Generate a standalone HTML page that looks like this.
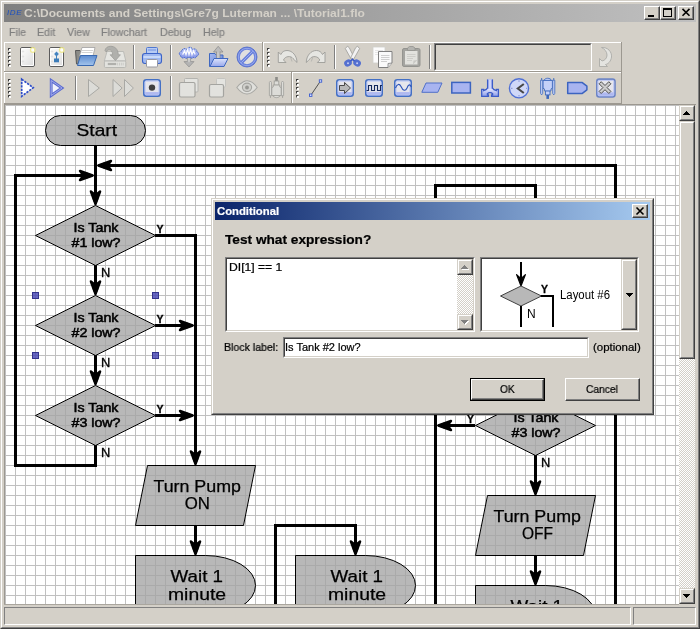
<!DOCTYPE html>
<html>
<head>
<meta charset="utf-8">
<title>Tutorial1.flo</title>
<style>
html,body{margin:0;padding:0;}
body{width:700px;height:629px;overflow:hidden;background:#d4d0c8;position:relative;font-family:"Liberation Sans",sans-serif;font-size:11px;color:#000;}
.abs{position:absolute;}
.t{position:absolute;white-space:nowrap;line-height:1;transform-origin:0 0;will-change:transform;}
svg{will-change:transform;}
/* window frame */
#frame{left:0;top:0;width:700px;height:629px;box-sizing:border-box;border-top:1px solid #d4d0c8;border-left:1px solid #d4d0c8;border-right:1px solid #404040;border-bottom:1px solid #404040;}
#frame2{left:1px;top:1px;width:698px;height:627px;box-sizing:border-box;border-top:1px solid #fff;border-left:1px solid #fff;border-right:1px solid #808080;border-bottom:1px solid #808080;}
#title{left:4px;top:4px;width:692px;height:18px;background:linear-gradient(to right,#808080 0%,#c0c0c0 100%);}
.cap{position:absolute;box-sizing:border-box;width:16px;height:14px;background:#d4d0c8;border-top:1px solid #fff;border-left:1px solid #fff;border-right:1px solid #404040;border-bottom:1px solid #404040;}
.cap:after{content:"";position:absolute;left:0;top:0;right:0;bottom:0;border-right:1px solid #808080;border-bottom:1px solid #808080;}
.menu{color:#808080;font-size:11px;top:27px;transform:scaleX(0.965);-webkit-text-stroke:0.2px #808080;}
.tbline{position:absolute;height:1px;}
.vsep{position:absolute;width:1px;background:#808080;}
.vsep:after{content:"";position:absolute;left:1px;top:0;width:1px;height:100%;background:#fff;}
.grip{position:absolute;width:3px;height:20px;background:repeating-linear-gradient(to bottom,#fff 0,#fff 1px,#404040 1px,#404040 3px,transparent 3px,transparent 4px);}
#canvas{left:5px;top:105px;width:674px;height:499px;background-color:#fff;
 background-image:linear-gradient(to right,#c0c0c0 1px,transparent 1px),linear-gradient(to bottom,#c0c0c0 1px,transparent 1px);
 background-size:10px 10px;background-position:0 0;overflow:hidden;}
.sunk{position:absolute;box-sizing:border-box;border-top:1px solid #808080;border-left:1px solid #808080;border-right:1px solid #fff;border-bottom:1px solid #fff;}
.raised{position:absolute;box-sizing:border-box;background:#d4d0c8;border-top:1px solid #d4d0c8;border-left:1px solid #d4d0c8;border-right:1px solid #404040;border-bottom:1px solid #404040;}
.raised:after{content:"";position:absolute;left:0;top:0;right:0;bottom:0;border-top:1px solid #fff;border-left:1px solid #fff;border-right:1px solid #808080;border-bottom:1px solid #808080;}
.checker{background-color:#fff;background-image:linear-gradient(45deg,#d4d0c8 25%,transparent 25%,transparent 75%,#d4d0c8 75%),linear-gradient(45deg,#d4d0c8 25%,transparent 25%,transparent 75%,#d4d0c8 75%);background-size:2px 2px;background-position:0 0,1px 1px;}
.sunk2{position:absolute;box-sizing:border-box;border-top:1px solid #808080;border-left:1px solid #808080;border-right:1px solid #fff;border-bottom:1px solid #fff;}
.sunk2:after{content:"";position:absolute;left:0;top:0;right:0;bottom:0;border-top:1px solid #404040;border-left:1px solid #404040;border-right:1px solid #d4d0c8;border-bottom:1px solid #d4d0c8;}
.btn{position:absolute;box-sizing:border-box;background:#d4d0c8;border:1px solid #000;text-align:center;font-size:12px;line-height:20px;}
.btn:before{content:"";position:absolute;left:0;top:0;right:0;bottom:0;border-top:1px solid #fff;border-left:1px solid #fff;border-right:1px solid #404040;border-bottom:1px solid #404040;}
.btn:after{content:"";position:absolute;left:1px;top:1px;right:1px;bottom:1px;border-right:1px solid #808080;border-bottom:1px solid #808080;}
.raised2{position:absolute;box-sizing:border-box;background:#d4d0c8;border-top:1px solid #fff;border-left:1px solid #fff;border-right:1px solid #404040;border-bottom:1px solid #404040;}
.raised2:after{content:"";position:absolute;left:0;top:0;right:0;bottom:0;border-right:1px solid #808080;border-bottom:1px solid #808080;}
#dlg .t{-webkit-text-stroke:0.22px #000;}
#dlg #dtitle{-webkit-text-stroke:0.2px #fff;}
.fc{font-family:"Liberation Sans",sans-serif;fill:#000;text-anchor:middle;}
</style>
</head>
<body>
<!-- window frame -->
<div class="abs" id="frame"></div>
<div class="abs" id="frame2"></div>
<!-- title bar -->
<div class="abs" id="title"></div>
<div class="t" id="ide" style="left:6.5px;top:9px;font-size:8px;font-style:italic;color:#1c50c0;letter-spacing:0.6px;">IDE</div>
<div class="t" id="ttl" style="left:23.5px;top:7.6px;font-size:11px;transform:scaleX(1.092);font-weight:bold;color:#d4d0c8;">C:\Documents and Settings\Gre7g Luterman ... \Tutorial1.flo</div>
<div class="cap" style="left:644px;top:6px;"><div class="abs" style="left:3px;top:8px;width:6px;height:2px;background:#000;"></div></div>
<div class="cap" style="left:660px;top:6px;"><div class="abs" style="left:2px;top:1px;width:9px;height:9px;box-sizing:border-box;border:1px solid #000;border-top:2px solid #000;"></div></div>
<div class="cap" style="left:678px;top:6px;"><svg class="abs" style="left:0;top:0" width="14" height="12"><path d="M3.5 1.9 L10.5 8.8 M10.5 1.9 L3.5 8.8" stroke="#000" stroke-width="1.6" fill="none"/></svg></div>
<!-- menu -->
<div class="t menu" id="m1" style="left:9px;">File</div>
<div class="t menu" id="m2" style="left:37px;">Edit</div>
<div class="t menu" id="m3" style="left:67px;">View</div>
<div class="t menu" id="m4" style="left:101px;">Flowchart</div>
<div class="t menu" id="m5" style="left:160px;">Debug</div>
<div class="t menu" id="m6" style="left:203px;">Help</div>
<!-- TOOLBARS -->
<div id="toolbars" class="abs" style="left:0;top:0;width:0;height:0;">
<div class="abs" style="left:4px;top:42px;width:258px;height:1px;background:#fff;"></div>
<div class="abs" style="left:4px;top:42px;width:1px;height:29px;background:#fff;"></div>
<div class="abs" style="left:262px;top:42px;width:1px;height:30px;background:#9c9890;"></div>
<div class="abs" style="left:4px;top:71px;width:259px;height:1px;background:#9c9890;"></div>
<div class="abs" style="left:263px;top:42px;width:358px;height:1px;background:#fff;"></div>
<div class="abs" style="left:263px;top:42px;width:1px;height:29px;background:#fff;"></div>
<div class="abs" style="left:621px;top:42px;width:1px;height:30px;background:#9c9890;"></div>
<div class="abs" style="left:263px;top:71px;width:359px;height:1px;background:#9c9890;"></div>
<div class="abs" style="left:4px;top:72px;width:287px;height:1px;background:#fff;"></div>
<div class="abs" style="left:4px;top:72px;width:1px;height:31px;background:#fff;"></div>
<div class="abs" style="left:291px;top:72px;width:1px;height:32px;background:#9c9890;"></div>
<div class="abs" style="left:4px;top:103px;width:288px;height:1px;background:#9c9890;"></div>
<div class="abs" style="left:292px;top:72px;width:329px;height:1px;background:#fff;"></div>
<div class="abs" style="left:292px;top:72px;width:1px;height:31px;background:#fff;"></div>
<div class="abs" style="left:621px;top:72px;width:1px;height:32px;background:#9c9890;"></div>
<div class="abs" style="left:292px;top:103px;width:330px;height:1px;background:#9c9890;"></div>
<svg class="abs" style="left:8px;top:48px" width="3" height="19" shape-rendering="crispEdges"><rect x="0" y="0" width="2" height="1" fill="#404040"/><rect x="0" y="1" width="1" height="1" fill="#404040"/><rect x="2" y="0" width="1" height="1" fill="#9c9a94"/><rect x="0" y="2" width="1" height="1" fill="#9c9a94"/><rect x="1" y="1" width="2" height="1" fill="#fff"/><rect x="1" y="2" width="2" height="1" fill="#fff"/><rect x="0" y="4" width="2" height="1" fill="#404040"/><rect x="0" y="5" width="1" height="1" fill="#404040"/><rect x="2" y="4" width="1" height="1" fill="#9c9a94"/><rect x="0" y="6" width="1" height="1" fill="#9c9a94"/><rect x="1" y="5" width="2" height="1" fill="#fff"/><rect x="1" y="6" width="2" height="1" fill="#fff"/><rect x="0" y="8" width="2" height="1" fill="#404040"/><rect x="0" y="9" width="1" height="1" fill="#404040"/><rect x="2" y="8" width="1" height="1" fill="#9c9a94"/><rect x="0" y="10" width="1" height="1" fill="#9c9a94"/><rect x="1" y="9" width="2" height="1" fill="#fff"/><rect x="1" y="10" width="2" height="1" fill="#fff"/><rect x="0" y="12" width="2" height="1" fill="#404040"/><rect x="0" y="13" width="1" height="1" fill="#404040"/><rect x="2" y="12" width="1" height="1" fill="#9c9a94"/><rect x="0" y="14" width="1" height="1" fill="#9c9a94"/><rect x="1" y="13" width="2" height="1" fill="#fff"/><rect x="1" y="14" width="2" height="1" fill="#fff"/><rect x="0" y="16" width="2" height="1" fill="#404040"/><rect x="0" y="17" width="1" height="1" fill="#404040"/><rect x="2" y="16" width="1" height="1" fill="#9c9a94"/><rect x="0" y="18" width="1" height="1" fill="#9c9a94"/><rect x="1" y="17" width="2" height="1" fill="#fff"/><rect x="1" y="18" width="2" height="1" fill="#fff"/></svg>
<svg class="abs" style="left:267px;top:48px" width="3" height="19" shape-rendering="crispEdges"><rect x="0" y="0" width="2" height="1" fill="#404040"/><rect x="0" y="1" width="1" height="1" fill="#404040"/><rect x="2" y="0" width="1" height="1" fill="#9c9a94"/><rect x="0" y="2" width="1" height="1" fill="#9c9a94"/><rect x="1" y="1" width="2" height="1" fill="#fff"/><rect x="1" y="2" width="2" height="1" fill="#fff"/><rect x="0" y="4" width="2" height="1" fill="#404040"/><rect x="0" y="5" width="1" height="1" fill="#404040"/><rect x="2" y="4" width="1" height="1" fill="#9c9a94"/><rect x="0" y="6" width="1" height="1" fill="#9c9a94"/><rect x="1" y="5" width="2" height="1" fill="#fff"/><rect x="1" y="6" width="2" height="1" fill="#fff"/><rect x="0" y="8" width="2" height="1" fill="#404040"/><rect x="0" y="9" width="1" height="1" fill="#404040"/><rect x="2" y="8" width="1" height="1" fill="#9c9a94"/><rect x="0" y="10" width="1" height="1" fill="#9c9a94"/><rect x="1" y="9" width="2" height="1" fill="#fff"/><rect x="1" y="10" width="2" height="1" fill="#fff"/><rect x="0" y="12" width="2" height="1" fill="#404040"/><rect x="0" y="13" width="1" height="1" fill="#404040"/><rect x="2" y="12" width="1" height="1" fill="#9c9a94"/><rect x="0" y="14" width="1" height="1" fill="#9c9a94"/><rect x="1" y="13" width="2" height="1" fill="#fff"/><rect x="1" y="14" width="2" height="1" fill="#fff"/><rect x="0" y="16" width="2" height="1" fill="#404040"/><rect x="0" y="17" width="1" height="1" fill="#404040"/><rect x="2" y="16" width="1" height="1" fill="#9c9a94"/><rect x="0" y="18" width="1" height="1" fill="#9c9a94"/><rect x="1" y="17" width="2" height="1" fill="#fff"/><rect x="1" y="18" width="2" height="1" fill="#fff"/></svg>
<svg class="abs" style="left:8px;top:79px" width="3" height="19" shape-rendering="crispEdges"><rect x="0" y="0" width="2" height="1" fill="#404040"/><rect x="0" y="1" width="1" height="1" fill="#404040"/><rect x="2" y="0" width="1" height="1" fill="#9c9a94"/><rect x="0" y="2" width="1" height="1" fill="#9c9a94"/><rect x="1" y="1" width="2" height="1" fill="#fff"/><rect x="1" y="2" width="2" height="1" fill="#fff"/><rect x="0" y="4" width="2" height="1" fill="#404040"/><rect x="0" y="5" width="1" height="1" fill="#404040"/><rect x="2" y="4" width="1" height="1" fill="#9c9a94"/><rect x="0" y="6" width="1" height="1" fill="#9c9a94"/><rect x="1" y="5" width="2" height="1" fill="#fff"/><rect x="1" y="6" width="2" height="1" fill="#fff"/><rect x="0" y="8" width="2" height="1" fill="#404040"/><rect x="0" y="9" width="1" height="1" fill="#404040"/><rect x="2" y="8" width="1" height="1" fill="#9c9a94"/><rect x="0" y="10" width="1" height="1" fill="#9c9a94"/><rect x="1" y="9" width="2" height="1" fill="#fff"/><rect x="1" y="10" width="2" height="1" fill="#fff"/><rect x="0" y="12" width="2" height="1" fill="#404040"/><rect x="0" y="13" width="1" height="1" fill="#404040"/><rect x="2" y="12" width="1" height="1" fill="#9c9a94"/><rect x="0" y="14" width="1" height="1" fill="#9c9a94"/><rect x="1" y="13" width="2" height="1" fill="#fff"/><rect x="1" y="14" width="2" height="1" fill="#fff"/><rect x="0" y="16" width="2" height="1" fill="#404040"/><rect x="0" y="17" width="1" height="1" fill="#404040"/><rect x="2" y="16" width="1" height="1" fill="#9c9a94"/><rect x="0" y="18" width="1" height="1" fill="#9c9a94"/><rect x="1" y="17" width="2" height="1" fill="#fff"/><rect x="1" y="18" width="2" height="1" fill="#fff"/></svg>
<svg class="abs" style="left:296px;top:79px" width="3" height="19" shape-rendering="crispEdges"><rect x="0" y="0" width="2" height="1" fill="#404040"/><rect x="0" y="1" width="1" height="1" fill="#404040"/><rect x="2" y="0" width="1" height="1" fill="#9c9a94"/><rect x="0" y="2" width="1" height="1" fill="#9c9a94"/><rect x="1" y="1" width="2" height="1" fill="#fff"/><rect x="1" y="2" width="2" height="1" fill="#fff"/><rect x="0" y="4" width="2" height="1" fill="#404040"/><rect x="0" y="5" width="1" height="1" fill="#404040"/><rect x="2" y="4" width="1" height="1" fill="#9c9a94"/><rect x="0" y="6" width="1" height="1" fill="#9c9a94"/><rect x="1" y="5" width="2" height="1" fill="#fff"/><rect x="1" y="6" width="2" height="1" fill="#fff"/><rect x="0" y="8" width="2" height="1" fill="#404040"/><rect x="0" y="9" width="1" height="1" fill="#404040"/><rect x="2" y="8" width="1" height="1" fill="#9c9a94"/><rect x="0" y="10" width="1" height="1" fill="#9c9a94"/><rect x="1" y="9" width="2" height="1" fill="#fff"/><rect x="1" y="10" width="2" height="1" fill="#fff"/><rect x="0" y="12" width="2" height="1" fill="#404040"/><rect x="0" y="13" width="1" height="1" fill="#404040"/><rect x="2" y="12" width="1" height="1" fill="#9c9a94"/><rect x="0" y="14" width="1" height="1" fill="#9c9a94"/><rect x="1" y="13" width="2" height="1" fill="#fff"/><rect x="1" y="14" width="2" height="1" fill="#fff"/><rect x="0" y="16" width="2" height="1" fill="#404040"/><rect x="0" y="17" width="1" height="1" fill="#404040"/><rect x="2" y="16" width="1" height="1" fill="#9c9a94"/><rect x="0" y="18" width="1" height="1" fill="#9c9a94"/><rect x="1" y="17" width="2" height="1" fill="#fff"/><rect x="1" y="18" width="2" height="1" fill="#fff"/></svg>
<div class="abs" style="left:133px;top:45px;width:1px;height:24px;background:#808080;"></div>
<div class="abs" style="left:134px;top:45px;width:1px;height:24px;background:#fff;"></div>
<div class="abs" style="left:170px;top:45px;width:1px;height:24px;background:#808080;"></div>
<div class="abs" style="left:171px;top:45px;width:1px;height:24px;background:#fff;"></div>
<div class="abs" style="left:334px;top:45px;width:1px;height:24px;background:#808080;"></div>
<div class="abs" style="left:335px;top:45px;width:1px;height:24px;background:#fff;"></div>
<div class="abs" style="left:429px;top:45px;width:1px;height:24px;background:#808080;"></div>
<div class="abs" style="left:430px;top:45px;width:1px;height:24px;background:#fff;"></div>
<div class="abs" style="left:75px;top:76px;width:1px;height:24px;background:#808080;"></div>
<div class="abs" style="left:76px;top:76px;width:1px;height:24px;background:#fff;"></div>
<div class="abs" style="left:170px;top:76px;width:1px;height:24px;background:#808080;"></div>
<div class="abs" style="left:171px;top:76px;width:1px;height:24px;background:#fff;"></div>
<div class="sunk2" style="left:434px;top:43px;width:158px;height:28px;"></div>
<svg width="0" height="0" style="position:absolute"><defs>
<linearGradient id="gPage" x1="0" y1="0" x2="1" y2="1"><stop offset="0" stop-color="#fff"/><stop offset="1" stop-color="#dcdcdc"/></linearGradient>
<linearGradient id="gBlue" x1="0" y1="0" x2="0" y2="1"><stop offset="0" stop-color="#5c8cd0"/><stop offset="1" stop-color="#a4c4ec"/></linearGradient>
<linearGradient id="gLav" x1="0" y1="0" x2="1" y2="1"><stop offset="0" stop-color="#a4b8f0"/><stop offset="1" stop-color="#6484d8"/></linearGradient>
<linearGradient id="gLav2" x1="0" y1="0" x2="0" y2="1"><stop offset="0" stop-color="#dce4fc"/><stop offset="1" stop-color="#98a8ec"/></linearGradient>
<linearGradient id="gCloud" x1="0" y1="0" x2="0" y2="1"><stop offset="0" stop-color="#c4d0fc"/><stop offset="1" stop-color="#8494e8"/></linearGradient>
<linearGradient id="gJ" x1="0" y1="0" x2="0" y2="1"><stop offset="0" stop-color="#c8d0f8"/><stop offset="0.6" stop-color="#dce0fc"/><stop offset="1" stop-color="#8c9ce8"/></linearGradient>
<linearGradient id="gStem" x1="0" y1="0" x2="1" y2="0"><stop offset="0" stop-color="#a0acf0"/><stop offset="0.5" stop-color="#e4e8fc"/><stop offset="1" stop-color="#a0acf0"/></linearGradient>
<linearGradient id="gGray" x1="0" y1="0" x2="0" y2="1"><stop offset="0" stop-color="#b4b4b0"/><stop offset="1" stop-color="#8c8c88"/></linearGradient>
<linearGradient id="gBtn" x1="0" y1="0" x2="0" y2="1"><stop offset="0" stop-color="#e8e8ec"/><stop offset="0.72" stop-color="#e4e4ec"/><stop offset="0.76" stop-color="#b4bcf0"/><stop offset="1" stop-color="#a4b0ec"/></linearGradient>
</defs></svg>
<svg class="abs" style="left:18px;top:44px" width="20" height="26" viewBox="18 44 20 26"><rect x="20.5" y="47.5" width="14" height="19" rx="1.5" fill="url(#gPage)" stroke="#5c5c5c" stroke-width="1"/><rect x="21.5" y="48.5" width="12" height="17" rx="0.5" fill="none" stroke="#fff" stroke-width="1"/><circle cx="23" cy="51.5" r="0.7" fill="#fff" stroke="#c0c0c0" stroke-width="0.4"/><circle cx="23" cy="56.5" r="0.7" fill="#fff" stroke="#c0c0c0" stroke-width="0.4"/><circle cx="23" cy="61.5" r="0.7" fill="#fff" stroke="#c0c0c0" stroke-width="0.4"/><circle cx="32.8" cy="50" r="2.3" fill="#fff" fill-opacity="0.8" stroke="#f0ea8c" stroke-width="1.3" stroke-opacity="0.9"/></svg>
<svg class="abs" style="left:47px;top:44px" width="20" height="26" viewBox="47 44 20 26"><rect x="49.5" y="47.5" width="14" height="19" rx="1.5" fill="url(#gPage)" stroke="#5c5c5c" stroke-width="1"/><rect x="50.5" y="48.5" width="12" height="17" rx="0.5" fill="none" stroke="#fff" stroke-width="1"/><circle cx="52" cy="51.5" r="0.7" fill="#fff" stroke="#c0c0c0" stroke-width="0.4"/><circle cx="52" cy="56.5" r="0.7" fill="#fff" stroke="#c0c0c0" stroke-width="0.4"/><circle cx="52" cy="61.5" r="0.7" fill="#fff" stroke="#c0c0c0" stroke-width="0.4"/><circle cx="61.8" cy="50" r="2.3" fill="#fff" fill-opacity="0.8" stroke="#f0ea8c" stroke-width="1.3" stroke-opacity="0.9"/><path d="M56.5,51.6 L58.9,54 L56.5,56.4 L54.1,54Z" fill="#4484c0"/><rect x="56" y="56" width="1" height="3" fill="#4484c0"/><rect x="54" y="58.5" width="5" height="3.8" fill="#3c7cb8"/></svg>
<svg class="abs" style="left:73px;top:44px" width="28" height="26" viewBox="73 44 28 26"><path d="M75.5,50.5 L80,50.5 L81,52 L88,52 L88,64 L76.5,64Z" fill="#8c8c88" stroke="#585858" stroke-width="1"/><path d="M79.5,56 L82,47.5 L95,47.5 L93,56Z" fill="#fff" stroke="#a0a0a0" stroke-width="0.8"/><path d="M82,50.5 L93,50.5 M81.5,52.5 L92.5,52.5" stroke="#c8c8c8" stroke-width="0.8"/><path d="M80.5,55.5 L97,55.5 L93.5,65.5 L77.5,65.5Z" fill="url(#gBlue)" stroke="#3868b0" stroke-width="1"/></svg>
<svg class="abs" style="left:102px;top:44px" width="28" height="26" viewBox="102 44 28 26"><path d="M107,51.5 L123.5,51.5 L125.8,61 L104.3,61Z" fill="#e6e6e2" stroke="#b8b8b4" stroke-width="0.9"/><rect x="104.4" y="61" width="21.4" height="6.5" rx="1.2" fill="#e2e2de" stroke="#b4b4b0" stroke-width="0.9"/><rect x="107.8" y="62.9" width="8.4" height="2.2" fill="#b0b0ac"/><path d="M117.6,62.8v2.6 M119.5,62.8v2.6 M121.4,62.8v2.6 M123.2,62.8v2.6" stroke="#c4c4c0" stroke-width="0.8"/><path d="M105,50.5 C105.5,47.5 108,46.3 110.5,46.3 C114.5,46.3 118,48.5 118.3,54.8 L120.4,54.8 L115.4,60.6 L110.2,54.8 L112.6,54.8 C112.6,51.5 111,49.8 109.3,49.8 C108,49.8 107,50.5 106.3,52Z" fill="#b0b0ac" stroke="#9c9c98" stroke-width="0.8"/></svg>
<svg class="abs" style="left:140px;top:44px" width="24" height="26" viewBox="140 44 24 26"><rect x="146.5" y="47.5" width="11" height="8" rx="1" fill="#b8ccf4" stroke="#5078d0" stroke-width="1"/><path d="M148,50 h8" stroke="#7090e0" stroke-width="1"/><rect x="142.5" y="53.5" width="19" height="10" rx="2.5" fill="#a0b8f0" stroke="#3c64c8" stroke-width="1.1"/><path d="M143.5,57 h17" stroke="#dce8fc" stroke-width="1.4"/><rect x="146.5" y="59.5" width="11" height="7.5" rx="1" fill="#fff" stroke="#9898a0" stroke-width="1"/></svg>
<svg class="abs" style="left:177px;top:44px" width="24" height="26" viewBox="177 44 24 26"><rect x="187.3" y="56.4" width="3.4" height="6" fill="#d0d0d0" stroke="#8c8c8c" stroke-width="0.7"/><path d="M184,61.6 L194,61.6 L189,66.9Z" fill="#b4b4b4" stroke="#8c8c8c" stroke-width="0.7"/><rect x="187.7" y="60.5" width="2.6" height="1.8" fill="#c8c8c8"/><path d="M180.8,56 C178.6,54.8 178.8,51.6 181.6,51.2 C181.8,48.8 185,47.8 186.8,49.3 C187.8,46.6 191.8,46.6 192.6,49.3 C195,48 197.6,50 196.8,51.8 C199.2,52.4 199.2,55.4 196.8,56 C196.6,57.6 194.6,58.4 193.2,57.4 C192,58.6 190.6,58.4 190.4,57.4 L187.4,57.4 C187,58.6 185.4,58.8 184.6,57.4 C183,58.6 181,57.8 180.8,56Z" fill="url(#gCloud)" stroke="#3c60c8" stroke-width="0.9" stroke-dasharray="1.4 0.6"/><path d="M182.6,54.6 L184.6,50.8 L186,54.6 L187.6,49.4 L189,54.6 L190.6,49.4 L192,54.6 L193.6,50.8 L195.2,54.6" fill="none" stroke="#fff" stroke-width="1.2" stroke-opacity="0.95"/></svg>
<svg class="abs" style="left:207px;top:44px" width="24" height="26" viewBox="207 44 24 26"><path d="M209.5,53.5 L215,53.5 L216,55 L223,55 L223,66.5 L209.5,66.5Z" fill="url(#gLav)" stroke="#4068c0" stroke-width="1"/><rect x="216.5" y="51" width="3.5" height="8" fill="#c8c8c8" stroke="#888" stroke-width="0.7"/><path d="M213.5,52 L218.2,46.3 L223,52Z" fill="#bcbcbc" stroke="#888" stroke-width="0.7"/><rect x="217" y="51.3" width="2.5" height="1.5" fill="#c8c8c8"/><path d="M214,58.5 L228,58.5 L224,66.5 L210,66.5Z" fill="url(#gLav2)" stroke="#4068c0" stroke-width="1"/></svg>
<svg class="abs" style="left:235px;top:45px" width="24" height="24" viewBox="235 45 24 24"><circle cx="247" cy="57" r="8.6" fill="#e0e0e0" stroke="#6880dc" stroke-width="2.8"/><path d="M241,63 L253,51" stroke="#6880dc" stroke-width="3.2"/><path d="M241.3,62.7 L252.7,51.3" stroke="#a4b4f4" stroke-width="0.9"/><circle cx="247" cy="57" r="8.7" fill="none" stroke="#a0b0f0" stroke-width="0.8"/><circle cx="247" cy="57" r="10" fill="none" stroke="#4c68cc" stroke-width="0.8"/></svg>
<svg class="abs" style="left:276px;top:48px" width="24" height="18" viewBox="276 48 24 18"><path d="M278.3,52 L278.3,62.5 L286,62.5 L283.5,60 C285,56 291,55.5 293,58.5 C295,60 296,62 297,62.5 C297,56 292.5,50.5 287,50.5 C284,50.5 282,52 280.8,54.5Z" fill="#e6e6e2" stroke="#9c9c98" stroke-width="0.9"/><path d="M290.5,57 L292,61.5" stroke="#b0b0ac" stroke-width="0.8" fill="none"/></svg>
<svg class="abs" style="left:304px;top:48px" width="24" height="18" viewBox="304 48 24 18"><g transform="translate(603.3,0) scale(-1,1)"><path d="M278.3,52 L278.3,62.5 L286,62.5 L283.5,60 C285,56 291,55.5 293,58.5 C295,60 296,62 297,62.5 C297,56 292.5,50.5 287,50.5 C284,50.5 282,52 280.8,54.5Z" fill="#e6e6e2" stroke="#9c9c98" stroke-width="0.9"/><path d="M290.5,57 L292,61.5" stroke="#b0b0ac" stroke-width="0.8" fill="none"/></g></svg>
<svg class="abs" style="left:342px;top:44px" width="22" height="26" viewBox="342 44 22 26"><path d="M345.3,48.6 L347.4,46.2 L349.2,47.6 L354.3,57.8 L351.2,59.2Z" fill="#f2f2f2" stroke="#9c9c98" stroke-width="0.8"/><path d="M359.6,48.6 L357.5,46.2 L355.7,47.6 L350.6,57.8 L353.7,59.2Z" fill="#f2f2f2" stroke="#9c9c98" stroke-width="0.8"/><ellipse cx="348" cy="63" rx="3.9" ry="3.4" transform="rotate(-25 348 63)" fill="#5470d0"/><ellipse cx="357.1" cy="63" rx="3.9" ry="3.4" transform="rotate(25 357.1 63)" fill="#5470d0"/><circle cx="348" cy="63.3" r="1" fill="#c4ccf4"/><circle cx="357.1" cy="63.3" r="1" fill="#c4ccf4"/><path d="M349.5,61 L352.5,58.3 L355.5,61 L353.3,61.5 L352.5,60.3 L351.7,61.5Z" fill="#3c5cc8"/></svg>
<svg class="abs" style="left:371px;top:44px" width="24" height="26" viewBox="371 44 24 26"><rect x="373" y="47" width="12" height="16" fill="#fcfcfc" stroke="#d0d0cc" stroke-width="0.8"/><path d="M375,50.5h8 M375,52.5h8 M375,54.5h3" stroke="#dcdcdc" stroke-width="0.7"/><path d="M378.5,51.5 L392,51.5 L392,63 L388,67.5 L378.5,67.5Z" fill="#fafafa" stroke="#808080" stroke-width="1"/><path d="M388,67.5 L388,63.5 L392,63" fill="#e0e0e0" stroke="#808080" stroke-width="0.8"/><path d="M381,55.5h8.5 M381,57.5h8.5 M381,59.5h8.5 M381,61.5h6" stroke="#bcbcbc" stroke-width="0.7"/></svg>
<svg class="abs" style="left:400px;top:44px" width="24" height="26" viewBox="400 44 24 26"><rect x="402.5" y="48.5" width="17.5" height="18" rx="1.5" fill="#a4a4a0" stroke="#949490" stroke-width="1"/><rect x="405" y="51" width="12.5" height="13.5" fill="#e2e2de"/><path d="M407.5,50.5 L407.5,48 L409.5,46.5 L413,46.5 L415,48 L415,50.5Z" fill="#b4b4b0" stroke="#949490" stroke-width="0.8"/><path d="M407,54.5h8.5 M407,56.5h8.5 M407,58.5h6 M407,60.5h5" stroke="#c4c4c0" stroke-width="0.7"/><path d="M417.5,60 L413.5,60.5 L413,64.5Z" fill="#c8c8c4"/></svg>
<svg class="abs" style="left:597px;top:44px" width="18" height="26" viewBox="597 44 18 26"><path d="M601.5,47.5 C608,47 612,52 611.5,57 C611,61.5 608,64 605.5,64.5 L607.5,66.5 L599.5,66.5 L599.5,58.5 L602,61 C605,60.5 607,58 607,55 C607,51.5 604.5,49 601.5,47.5Z" fill="#e4e4e0" stroke="#acaca8" stroke-width="0.9"/></svg>
<svg class="abs" style="left:19px;top:76px" width="18" height="24" viewBox="19 76 18 24"><path d="M21.7,79.2 L33.2,87.7 L21.7,96.3 Z" fill="#fff" stroke="#2c4cc8" stroke-width="1.7" stroke-dasharray="2.3 1.1" stroke-linejoin="miter"/></svg>
<svg class="abs" style="left:48px;top:76px" width="20" height="24" viewBox="48 76 20 24"><path d="M51.2,80.5 L62,88 L51.2,95.5 Z" fill="#f0f2fc" stroke="#5c6cd0" stroke-width="2.8" stroke-linejoin="miter"/><path d="M51.2,80.5 L62,88 L51.2,95.5 Z" fill="none" stroke="#a8b0ec" stroke-width="0.9" stroke-linejoin="miter"/></svg>
<svg class="abs" style="left:86px;top:76px" width="16" height="24" viewBox="86 76 16 24"><path d="M88.5,79.5 L99.3,88 L88.5,96.5 Z" fill="#dcdcd8" stroke="#a8a8a4" stroke-width="1" stroke-linejoin="round"/></svg>
<svg class="abs" style="left:110px;top:76px" width="26" height="24" viewBox="110 76 26 24"><path d="M113,79.5 L122.1,88 L113,96.5 Z" fill="#dcdcd8" stroke="#a8a8a4" stroke-width="1" stroke-linejoin="round"/><path d="M124.5,79.5 L133.4,88 L124.5,96.5 Z" fill="#dcdcd8" stroke="#a8a8a4" stroke-width="1" stroke-linejoin="round"/></svg>
<svg class="abs" style="left:141px;top:77px" width="22" height="22" viewBox="141 77 22 22"><rect x="143.8" y="79.8" width="16.4" height="16.4" rx="2.5" fill="url(#gBtn)" stroke="#4470c4" stroke-width="1.6"/><rect x="145.1" y="81.1" width="13.8" height="13.8" rx="1" fill="none" stroke="#b8c4f6" stroke-width="0.9"/><circle cx="152" cy="87.6" r="3.2" fill="#404040"/></svg>
<svg class="abs" style="left:177px;top:76px" width="24" height="24" viewBox="177 76 24 24"><rect x="184.5" y="78.5" width="13.5" height="13.5" rx="1" fill="#e4e4e0" stroke="#b4b4b0" stroke-width="1"/><rect x="179.5" y="82.5" width="15.5" height="14.5" rx="1.5" fill="#e2e2de" stroke="#a4a4a0" stroke-width="1.2"/></svg>
<svg class="abs" style="left:207px;top:76px" width="22" height="24" viewBox="207 76 22 24"><rect x="216.5" y="78.5" width="9" height="8.5" rx="1" fill="#e4e4e0" stroke="#c4c4c0" stroke-width="1"/><rect x="209.5" y="84.5" width="14" height="12.5" rx="1.5" fill="#e2e2de" stroke="#a4a4a0" stroke-width="1.2"/></svg>
<svg class="abs" style="left:235px;top:78px" width="24" height="18" viewBox="235 78 24 18"><path d="M236.8,87.5 C241,82 246,80.8 247,80.8 C252,80.8 255,84.5 257.2,87.5 C254,91.5 250,94 247,94 C243,94 239.5,91 236.8,87.5Z" fill="#e0e0dc" stroke="#a8a8a4" stroke-width="1.1"/><ellipse cx="247" cy="87.3" rx="4.6" ry="4.2" fill="#d0d0cc" stroke="#a4a4a0" stroke-width="1.1"/><circle cx="247" cy="87.5" r="1.9" fill="#989894"/></svg>
<svg class="abs" style="left:267px;top:75px" width="20" height="25" viewBox="267 75 20 25"><g transform="translate(269,77)"><rect x="6.2" y="0" width="2.6" height="4.2" fill="#8c8c88"/><rect x="5.2" y="4" width="4.6" height="4.2" fill="#dcdcd8" stroke="#a0a09c" stroke-width="0.9"/><path d="M3.5,18.3 C5,21.4 10,21.4 11.5,18.3Z" fill="#dcdcd8" stroke="#a0a09c" stroke-width="0.9"/><path d="M4.2,8 L10.8,8 L10.8,10 L12.2,10.6 L12.2,18.5 L2.8,18.5 L2.8,10.6 L4.2,10Z" fill="#dcdcd8" stroke="#a0a09c" stroke-width="0.9"/><path d="M0.4,18.7 L0.4,5.5 L1.45,4 L2.5,5.5 L2.5,18.7Z" fill="#dcdcd8" stroke="#a0a09c" stroke-width="0.8"/><path d="M1.45,18.7 v2.2" stroke="#a0a09c" stroke-width="0.9"/><path d="M12.5,18.7 L12.5,5.5 L13.55,4 L14.6,5.5 L14.6,18.7Z" fill="#dcdcd8" stroke="#a0a09c" stroke-width="0.8"/><path d="M13.55,18.7 v2.2" stroke="#a0a09c" stroke-width="0.9"/></g></svg>
<svg class="abs" style="left:307px;top:77px" width="18" height="22" viewBox="307 77 18 22"><path d="M311,95 L320.5,81" stroke="#505050" stroke-width="1"/><rect x="309.5" y="94" width="2.4" height="2.4" fill="#dce4ff" stroke="#3c5cd0" stroke-width="0.9"/><rect x="319.3" y="79.8" width="2.4" height="2.4" fill="#dce4ff" stroke="#3c5cd0" stroke-width="0.9"/></svg>
<svg class="abs" style="left:334px;top:77px" width="22" height="22" viewBox="334 77 22 22"><rect x="336.8" y="79.8" width="16.4" height="16.4" rx="2.5" fill="url(#gBtn)" stroke="#4470c4" stroke-width="1.6"/><rect x="338.1" y="81.1" width="13.8" height="13.8" rx="1" fill="none" stroke="#b8c4f6" stroke-width="0.9"/><path d="M339.5,85.5 L344.5,85.5 L344.5,82.5 L350.5,88 L344.5,93.5 L344.5,90.5 L339.5,90.5Z" fill="#b8b8b8" stroke="#484848" stroke-width="1"/></svg>
<svg class="abs" style="left:363px;top:77px" width="22" height="22" viewBox="363 77 22 22"><rect x="365.8" y="79.8" width="16.4" height="16.4" rx="2.5" fill="url(#gBtn)" stroke="#4470c4" stroke-width="1.6"/><rect x="367.1" y="81.1" width="13.8" height="13.8" rx="1" fill="none" stroke="#b8c4f6" stroke-width="0.9"/><path d="M366.5,90.5 L368.5,90.5 L368.5,85.5 L371.5,85.5 L371.5,90.5 L374.5,90.5 L374.5,85.5 L377.5,85.5 L377.5,90.5 L380.5,90.5 L380.5,85.5 L382,85.5" fill="none" stroke="#14285c" stroke-width="1.1"/></svg>
<svg class="abs" style="left:392px;top:77px" width="22" height="22" viewBox="392 77 22 22"><rect x="394.8" y="79.8" width="16.4" height="16.4" rx="2.5" fill="url(#gBtn)" stroke="#4470c4" stroke-width="1.6"/><rect x="396.1" y="81.1" width="13.8" height="13.8" rx="1" fill="none" stroke="#b8c4f6" stroke-width="0.9"/><path d="M395.5,88 C397,83.5 399.5,83.5 401,86.5 C403,91 405.5,91.5 407,88 C408.5,84 410,84 411.3,87" fill="none" stroke="#2c54b8" stroke-width="1.1"/></svg>
<svg class="abs" style="left:420px;top:80px" width="24" height="16" viewBox="420 80 24 16"><path d="M426,83 L442,83 L437.8,92.3 L421.8,92.3Z" fill="#a8b4f0" stroke="#5070c8" stroke-width="1"/></svg>
<svg class="abs" style="left:450px;top:80px" width="23" height="16" viewBox="450 80 23 16"><rect x="451.8" y="82.4" width="18.6" height="10.6" fill="#a8b4f0" stroke="#3c64c0" stroke-width="1.5"/></svg>
<svg class="abs" style="left:479px;top:77px" width="22" height="22" viewBox="479 77 22 22"><path d="M487.6,79.3 L487.6,88 L486,89.6 L483.6,90.6 L483.6,89.4 L481.7,89.4 L481.7,96.3 L488.5,96.3 L488.5,94.8 L487.4,94.8 L487.4,93.6 L489,92.7 L491,92.7 L492.6,93.6 L492.6,94.8 L491.5,94.8 L491.5,96.3 L498.4,96.3 L498.4,89.4 L496.5,89.4 L496.5,90.6 L494,89.6 L492.4,88 L492.4,79.3Z" fill="url(#gJ)"/><rect x="488.4" y="79" width="3.2" height="10" fill="url(#gStem)"/><path d="M487.6,79.3 L487.6,88 L486,89.6 L483.6,90.6 L483.6,89.4 L481.7,89.4 L481.7,96.3 L488.5,96.3 L488.5,94.8 L487.4,94.8 L487.4,93.6 L489,92.7 L491,92.7 L492.6,93.6 L492.6,94.8 L491.5,94.8 L491.5,96.3 L498.4,96.3 L498.4,89.4 L496.5,89.4 L496.5,90.6 L494,89.6 L492.4,88 L492.4,79.3" fill="none" stroke="#3c5cc8" stroke-width="1.3" stroke-linejoin="miter"/><path d="M487.6,79.3 L492.4,79.3" stroke="#b4bce8" stroke-width="0.8"/></svg>
<svg class="abs" style="left:508px;top:77px" width="22" height="23" viewBox="508 77 22 23"><circle cx="519" cy="88.3" r="9.6" fill="#d0d8f8" stroke="#5070d4" stroke-width="1.4"/><path d="M523.8,84 L517.8,88.5 L523.8,93" fill="none" stroke="#484848" stroke-width="2.1"/><path d="M519,80.3v1.5 M519,95v1.5 M511,88.3h1.5 M526,88.3h1.2" stroke="#8090d0" stroke-width="1"/></svg>
<svg class="abs" style="left:538px;top:76px" width="20" height="25" viewBox="538 76 20 25"><g transform="translate(540.2,98.9) scale(1,-1)"><rect x="6.2" y="0" width="2.6" height="4.2" fill="#3c68bc"/><rect x="5.2" y="4" width="4.6" height="4.2" fill="#c4d0f8" stroke="#3c68bc" stroke-width="0.9"/><path d="M3.5,18.3 C5,21.4 10,21.4 11.5,18.3Z" fill="#c4d0f8" stroke="#3c68bc" stroke-width="0.9"/><path d="M4.2,8 L10.8,8 L10.8,10 L12.2,10.6 L12.2,18.5 L2.8,18.5 L2.8,10.6 L4.2,10Z" fill="#c4d0f8" stroke="#3c68bc" stroke-width="0.9"/><path d="M0.4,18.7 L0.4,5.5 L1.45,4 L2.5,5.5 L2.5,18.7Z" fill="#c4d0f8" stroke="#3c68bc" stroke-width="0.8"/><path d="M1.45,18.7 v2.2" stroke="#3c68bc" stroke-width="0.9"/><path d="M12.5,18.7 L12.5,5.5 L13.55,4 L14.6,5.5 L14.6,18.7Z" fill="#c4d0f8" stroke="#3c68bc" stroke-width="0.8"/><path d="M13.55,18.7 v2.2" stroke="#3c68bc" stroke-width="0.9"/></g></svg>
<svg class="abs" style="left:566px;top:80px" width="23" height="16" viewBox="566 80 23 16"><path d="M567.7,82.6 L582.3,82.6 L586.9,86.2 L586.9,89.8 L582.3,93.4 L567.7,93.4Z" fill="#a8b4f0" stroke="#3c64c0" stroke-width="1.5" stroke-linejoin="round"/></svg>
<svg class="abs" style="left:594px;top:77px" width="23" height="23" viewBox="594 77 23 23"><rect x="596.8" y="79.1" width="18.2" height="17.9" rx="2.5" fill="url(#gBtn)" stroke="#6c84c4" stroke-width="1.6"/><rect x="598.1" y="80.4" width="15.6" height="15.3" rx="1" fill="none" stroke="#b8c4f6" stroke-width="0.9"/><path d="M601.2,81.7 L605,85.5 L608.8,81.7 L610.9,83.8 L607.1,87.6 L610.9,91.4 L608.8,93.5 L605,89.7 L601.2,93.5 L599.1,91.4 L602.9,87.6 L599.1,83.8Z" fill="#cccccc" stroke="#505050" stroke-width="1"/></svg>
</div>
<!-- canvas -->
<div class="abs" style="left:4px;top:104px;width:692px;height:1px;background:#9c9890;"></div>
<div class="abs" style="left:4px;top:104px;width:1px;height:500px;background:#9c9890;"></div>
<div class="abs" style="left:4px;top:604px;width:675px;height:1px;background:#aaa69e;"></div>
<div class="abs" id="canvas">
<svg id="flow" class="abs" style="left:-5px;top:-105px;" width="700" height="629" viewBox="0 0 700 629">
<path d="M95.5,146 L95.5,200" fill="none" stroke="#000" stroke-width="3" stroke-linejoin="miter"/>
<path d="M95.5,204.1 L90.9,191.5 L95.5,195.1 L100.1,191.5Z" fill="#000" stroke="#000" stroke-width="2.4" stroke-linejoin="round"/>
<path d="M95.5,205.8 L92.4,198.5 L98.6,198.5 Z" fill="#000"/>
<path d="M108,165.5 L615.5,165.5 L615.5,606" fill="none" stroke="#000" stroke-width="3" stroke-linejoin="miter"/>
<path d="M98.4,165.5 L111,160.9 L107.4,165.5 L111,170.1Z" fill="#000" stroke="#000" stroke-width="2.4" stroke-linejoin="round"/>
<path d="M96.7,165.5 L104,162.4 L104,168.6 Z" fill="#000"/>
<path d="M95.5,445 L95.5,465.5 L15.5,465.5 L15.5,175.5 L84,175.5" fill="none" stroke="#000" stroke-width="3" stroke-linejoin="miter"/>
<path d="M92.6,175.5 L80,170.9 L83.6,175.5 L80,180.1Z" fill="#000" stroke="#000" stroke-width="2.4" stroke-linejoin="round"/>
<path d="M94.3,175.5 L87,172.4 L87,178.6 Z" fill="#000"/>
<path d="M155,235.5 L195.5,235.5 L195.5,458" fill="none" stroke="#000" stroke-width="3" stroke-linejoin="miter"/>
<path d="M195.5,464.1 L190.9,451.5 L195.5,455.1 L200.1,451.5Z" fill="#000" stroke="#000" stroke-width="2.4" stroke-linejoin="round"/>
<path d="M195.5,465.8 L192.4,458.5 L198.6,458.5 Z" fill="#000"/>
<path d="M95.5,265 L95.5,288" fill="none" stroke="#000" stroke-width="3" stroke-linejoin="miter"/>
<path d="M95.5,294.1 L90.9,281.5 L95.5,285.1 L100.1,281.5Z" fill="#000" stroke="#000" stroke-width="2.4" stroke-linejoin="round"/>
<path d="M95.5,295.8 L92.4,288.5 L98.6,288.5 Z" fill="#000"/>
<path d="M155,325.5 L184,325.5" fill="none" stroke="#000" stroke-width="3" stroke-linejoin="miter"/>
<path d="M192.6,325.5 L180,320.9 L183.6,325.5 L180,330.1Z" fill="#000" stroke="#000" stroke-width="2.4" stroke-linejoin="round"/>
<path d="M194.3,325.5 L187,322.4 L187,328.6 Z" fill="#000"/>
<path d="M95.5,355 L95.5,378" fill="none" stroke="#000" stroke-width="3" stroke-linejoin="miter"/>
<path d="M95.5,384.1 L90.9,371.5 L95.5,375.1 L100.1,371.5Z" fill="#000" stroke="#000" stroke-width="2.4" stroke-linejoin="round"/>
<path d="M95.5,385.8 L92.4,378.5 L98.6,378.5 Z" fill="#000"/>
<path d="M155,415.5 L184,415.5" fill="none" stroke="#000" stroke-width="3" stroke-linejoin="miter"/>
<path d="M192.6,415.5 L180,410.9 L183.6,415.5 L180,420.1Z" fill="#000" stroke="#000" stroke-width="2.4" stroke-linejoin="round"/>
<path d="M194.3,415.5 L187,412.4 L187,418.6 Z" fill="#000"/>
<path d="M195.5,525 L195.5,548" fill="none" stroke="#000" stroke-width="3" stroke-linejoin="miter"/>
<path d="M195.5,554.1 L190.9,541.5 L195.5,545.1 L200.1,541.5Z" fill="#000" stroke="#000" stroke-width="2.4" stroke-linejoin="round"/>
<path d="M195.5,555.8 L192.4,548.5 L198.6,548.5 Z" fill="#000"/>
<path d="M275.5,606 L275.5,525.5 L355.5,525.5 L355.5,548" fill="none" stroke="#000" stroke-width="3" stroke-linejoin="miter"/>
<path d="M355.5,554.1 L350.9,541.5 L355.5,545.1 L360.1,541.5Z" fill="#000" stroke="#000" stroke-width="2.4" stroke-linejoin="round"/>
<path d="M355.5,555.8 L352.4,548.5 L358.6,548.5 Z" fill="#000"/>
<path d="M435.5,606 L435.5,185.5 L535.5,185.5 L535.5,230" fill="none" stroke="#000" stroke-width="3" stroke-linejoin="miter"/>
<path d="M475,425.5 L447,425.5" fill="none" stroke="#000" stroke-width="3" stroke-linejoin="miter"/>
<path d="M438.4,425.5 L451,420.9 L447.4,425.5 L451,430.1Z" fill="#000" stroke="#000" stroke-width="2.4" stroke-linejoin="round"/>
<path d="M436.7,425.5 L444,422.4 L444,428.6 Z" fill="#000"/>
<path d="M535.5,455 L535.5,488" fill="none" stroke="#000" stroke-width="3" stroke-linejoin="miter"/>
<path d="M535.5,494.1 L530.9,481.5 L535.5,485.1 L540.1,481.5Z" fill="#000" stroke="#000" stroke-width="2.4" stroke-linejoin="round"/>
<path d="M535.5,495.8 L532.4,488.5 L538.6,488.5 Z" fill="#000"/>
<path d="M535.5,555 L535.5,578" fill="none" stroke="#000" stroke-width="3" stroke-linejoin="miter"/>
<path d="M535.5,584.1 L530.9,571.5 L535.5,575.1 L540.1,571.5Z" fill="#000" stroke="#000" stroke-width="2.4" stroke-linejoin="round"/>
<path d="M535.5,585.8 L532.4,578.5 L538.6,578.5 Z" fill="#000"/>
<rect x="45.5" y="115.5" width="100" height="30" rx="15" ry="15" fill="rgba(164,164,164,0.78)" stroke="#000" stroke-width="1"/>
<path d="M35.5,235.5 L95.5,205.5 L155.5,235.5 L95.5,265.5Z" fill="rgba(164,164,164,0.78)" stroke="#000" stroke-width="1"/>
<path d="M35.5,325.5 L95.5,295.5 L155.5,325.5 L95.5,355.5Z" fill="rgba(164,164,164,0.78)" stroke="#000" stroke-width="1"/>
<path d="M35.5,415.5 L95.5,385.5 L155.5,415.5 L95.5,445.5Z" fill="rgba(164,164,164,0.78)" stroke="#000" stroke-width="1"/>
<path d="M475.5,425.5 L535.5,395.5 L595.5,425.5 L535.5,455.5Z" fill="rgba(164,164,164,0.78)" stroke="#000" stroke-width="1"/>
<path d="M147.5,465.5 L255.5,465.5 L243.5,525.5 L135.5,525.5Z" fill="rgba(164,164,164,0.78)" stroke="#000" stroke-width="1"/>
<path d="M487.5,495.5 L595.5,495.5 L583.5,555.5 L475.5,555.5Z" fill="rgba(164,164,164,0.78)" stroke="#000" stroke-width="1"/>
<path d="M135.5,615.5 L135.5,555.5 L205.5,555.5 A50,30 0 0 1 205.5,615.5 Z" fill="rgba(164,164,164,0.78)" stroke="#000" stroke-width="1"/>
<path d="M295.5,615.5 L295.5,555.5 L365.5,555.5 A50,30 0 0 1 365.5,615.5 Z" fill="rgba(164,164,164,0.78)" stroke="#000" stroke-width="1"/>
<path d="M475.5,645.5 L475.5,585.5 L545.5,585.5 A50,30 0 0 1 545.5,645.5 Z" fill="rgba(164,164,164,0.78)" stroke="#000" stroke-width="1"/>
<rect x="32.5" y="292.5" width="6" height="6" fill="rgba(70,70,180,0.82)" stroke="#34348c" stroke-width="1"/>
<rect x="152.5" y="292.5" width="6" height="6" fill="rgba(70,70,180,0.82)" stroke="#34348c" stroke-width="1"/>
<rect x="32.5" y="352.5" width="6" height="6" fill="rgba(70,70,180,0.82)" stroke="#34348c" stroke-width="1"/>
<rect x="152.5" y="352.5" width="6" height="6" fill="rgba(70,70,180,0.82)" stroke="#34348c" stroke-width="1"/>
<text class="fc" x="96.8" y="135.8" font-size="16.2" textLength="40.5" lengthAdjust="spacingAndGlyphs" stroke="#000" stroke-width="0.25" text-anchor="middle">Start</text>
<text class="fc" x="96" y="231.5" font-size="12" textLength="45" lengthAdjust="spacingAndGlyphs" stroke="#000" stroke-width="0.5" text-anchor="middle">Is Tank</text>
<text class="fc" x="96" y="246.5" font-size="12" textLength="49" lengthAdjust="spacingAndGlyphs" stroke="#000" stroke-width="0.5" text-anchor="middle">#1 low?</text>
<text class="fc" x="160" y="232.5" font-size="11" textLength="7" lengthAdjust="spacingAndGlyphs" font-weight="bold" stroke="#000" stroke-width="0.3" text-anchor="middle">Y</text>
<text class="fc" x="105.6" y="276.8" font-size="12.2" textLength="9.3" lengthAdjust="spacingAndGlyphs" stroke="#000" stroke-width="0.3" text-anchor="middle">N</text>
<text class="fc" x="96" y="321.5" font-size="12" textLength="45" lengthAdjust="spacingAndGlyphs" stroke="#000" stroke-width="0.5" text-anchor="middle">Is Tank</text>
<text class="fc" x="96" y="336.5" font-size="12" textLength="49" lengthAdjust="spacingAndGlyphs" stroke="#000" stroke-width="0.5" text-anchor="middle">#2 low?</text>
<text class="fc" x="160" y="322.5" font-size="11" textLength="7" lengthAdjust="spacingAndGlyphs" font-weight="bold" stroke="#000" stroke-width="0.3" text-anchor="middle">Y</text>
<text class="fc" x="105.6" y="366.8" font-size="12.2" textLength="9.3" lengthAdjust="spacingAndGlyphs" stroke="#000" stroke-width="0.3" text-anchor="middle">N</text>
<text class="fc" x="96" y="411.5" font-size="12" textLength="45" lengthAdjust="spacingAndGlyphs" stroke="#000" stroke-width="0.5" text-anchor="middle">Is Tank</text>
<text class="fc" x="96" y="426.5" font-size="12" textLength="49" lengthAdjust="spacingAndGlyphs" stroke="#000" stroke-width="0.5" text-anchor="middle">#3 low?</text>
<text class="fc" x="160" y="412.5" font-size="11" textLength="7" lengthAdjust="spacingAndGlyphs" font-weight="bold" stroke="#000" stroke-width="0.3" text-anchor="middle">Y</text>
<text class="fc" x="105.6" y="456.8" font-size="12.2" textLength="9.3" lengthAdjust="spacingAndGlyphs" stroke="#000" stroke-width="0.3" text-anchor="middle">N</text>
<text class="fc" x="536" y="421.5" font-size="12" textLength="45" lengthAdjust="spacingAndGlyphs" stroke="#000" stroke-width="0.5" text-anchor="middle">Is Tank</text>
<text class="fc" x="536" y="436.5" font-size="12" textLength="49" lengthAdjust="spacingAndGlyphs" stroke="#000" stroke-width="0.5" text-anchor="middle">#3 low?</text>
<text class="fc" x="470.5" y="422.5" font-size="11" textLength="7" lengthAdjust="spacingAndGlyphs" font-weight="bold" stroke="#000" stroke-width="0.3" text-anchor="middle">Y</text>
<text class="fc" x="545.6" y="466.8" font-size="12.2" textLength="9.3" lengthAdjust="spacingAndGlyphs" stroke="#000" stroke-width="0.3" text-anchor="middle">N</text>
<text class="fc" x="197.2" y="491.5" font-size="15.7" textLength="87.5" lengthAdjust="spacingAndGlyphs" stroke="#000" stroke-width="0.25" text-anchor="middle">Turn Pump</text>
<text class="fc" x="197.4" y="509.3" font-size="15.7" textLength="25.2" lengthAdjust="spacingAndGlyphs" stroke="#000" stroke-width="0.25" text-anchor="middle">ON</text>
<text class="fc" x="537.2" y="521.5" font-size="15.7" textLength="87.5" lengthAdjust="spacingAndGlyphs" stroke="#000" stroke-width="0.25" text-anchor="middle">Turn Pump</text>
<text class="fc" x="537.4" y="539.3" font-size="15.7" textLength="31" lengthAdjust="spacingAndGlyphs" stroke="#000" stroke-width="0.25" text-anchor="middle">OFF</text>
<text class="fc" x="196.8" y="581.6" font-size="15.8" textLength="52.5" lengthAdjust="spacingAndGlyphs" stroke="#000" stroke-width="0.25" text-anchor="middle">Wait 1</text>
<text class="fc" x="197" y="599.6" font-size="15.8" textLength="58" lengthAdjust="spacingAndGlyphs" stroke="#000" stroke-width="0.25" text-anchor="middle">minute</text>
<text class="fc" x="356.8" y="581.6" font-size="15.8" textLength="52.5" lengthAdjust="spacingAndGlyphs" stroke="#000" stroke-width="0.25" text-anchor="middle">Wait 1</text>
<text class="fc" x="357" y="599.6" font-size="15.8" textLength="58" lengthAdjust="spacingAndGlyphs" stroke="#000" stroke-width="0.25" text-anchor="middle">minute</text>
<text class="fc" x="536.8" y="611.6" font-size="15.8" textLength="52.5" lengthAdjust="spacingAndGlyphs" stroke="#000" stroke-width="0.25" text-anchor="middle">Wait 1</text>
</svg>
</div>
<!-- vertical scrollbar -->
<div class="abs checker" id="vsb" style="left:679px;top:105px;width:16px;height:499px;"></div>
<div class="raised" style="left:679px;top:105px;width:16px;height:16px;"><svg class="abs" style="left:0;top:0" width="16" height="16" shape-rendering="crispEdges"><path d="M6,5h1v1h1v1h1v1h1v1h-7v-1h1v-1h1v-1h1z" fill="#000"/></svg></div>
<div class="raised" style="left:679px;top:121px;width:16px;height:238px;"></div>
<div class="raised" style="left:679px;top:588px;width:16px;height:16px;"><svg class="abs" style="left:0;top:0" width="16" height="16" shape-rendering="crispEdges"><path d="M3,5h7v1h-1v1h-1v1h-1v1h-1v-1h-1v-1h-1v-1h-1z" fill="#000"/></svg></div>
<!-- status bar -->
<div class="sunk" style="left:4px;top:607px;width:627px;height:18px;"></div>
<div class="sunk" style="left:633px;top:607px;width:63px;height:18px;"></div>
<!-- DIALOG -->
<div id="dlg" class="abs" style="left:0;top:0;width:0;height:0;">
<div class="raised" style="left:211px;top:198px;width:443px;height:217px;"></div>
<div class="abs" style="left:215px;top:202px;width:435px;height:18px;background:linear-gradient(to right,#0a246a 0%,#a6caf0 100%);"></div>
<div class="t" id="dtitle" style="left:216.7px;transform:scaleX(1.026);top:206px;font-size:11px;font-weight:bold;color:#fff;">Conditional</div>
<div class="cap" style="left:632px;top:204px;"><svg class="abs" style="left:0;top:0" width="14" height="12"><path d="M3.5 2.5 L10.5 9.5 M10.5 2.5 L3.5 9.5" stroke="#000" stroke-width="1.6" fill="none"/></svg></div>
<div class="t" id="dq" style="left:225px;transform:scaleX(1.051);top:233px;font-size:13px;font-weight:bold;">Test what expression?</div>
<!-- text area -->
<div class="sunk2" style="left:225px;top:257px;width:250px;height:75px;background:#fff;"></div>
<div class="t" id="dexpr" style="left:229.3px;transform:scaleX(1.104);top:262px;font-size:11px;">DI[1] == 1</div>
<div class="abs checker" style="left:457px;top:259px;width:16px;height:71px;"></div>
<div class="raised" style="left:457px;top:259px;width:16px;height:16px;"><svg class="abs" style="left:0;top:0" width="14" height="14" shape-rendering="crispEdges"><path d="M6,5h1v1h1v1h1v1h1v1h-7v-1h1v-1h1v-1h1z" fill="#fff" transform="translate(1,1)"/><path d="M6,5h1v1h1v1h1v1h1v1h-7v-1h1v-1h1v-1h1z" fill="#808080"/></svg></div>
<div class="raised" style="left:457px;top:314px;width:16px;height:16px;"><svg class="abs" style="left:0;top:0" width="14" height="14" shape-rendering="crispEdges"><path d="M3,5h7v1h-1v1h-1v1h-1v1h-1v-1h-1v-1h-1v-1h-1z" fill="#fff" transform="translate(1,1)"/><path d="M3,5h7v1h-1v1h-1v1h-1v1h-1v-1h-1v-1h-1v-1h-1z" fill="#808080"/></svg></div>
<!-- layout combo -->
<div class="sunk2" style="left:480px;top:257px;width:159px;height:75px;background:#fff;"></div>
<div class="raised" style="left:621px;top:259px;width:16px;height:71px;"><svg class="abs" style="left:0;top:0" width="16" height="71" shape-rendering="crispEdges"><path d="M4,33h7v1h-1v1h-1v1h-1v1h-1v-1h-1v-1h-1v-1h-1z" fill="#000"/></svg></div>
<svg class="abs" style="left:482px;top:259px;" width="139" height="71" viewBox="482 259 139 71">
<path d="M521,262 L521,280" stroke="#000" stroke-width="2" fill="none"/>
<path d="M521,286 L516.6,274.6 L521,278.6 L525.4,274.6Z" fill="#000" stroke="#000" stroke-width="1.2" stroke-linejoin="round"/>
<path d="M500.5,296 L521,286 L541.5,296 L521,306Z" fill="#b8b8b8" stroke="#404040" stroke-width="1"/>
<path d="M541,296 L553,296 L553,327 M521,306 L521,327" stroke="#000" stroke-width="2" fill="none"/>
<text x="541" y="292.7" font-size="11.5" font-weight="bold" stroke="#000" stroke-width="0.3" font-family="'Liberation Sans',sans-serif" textLength="7" lengthAdjust="spacingAndGlyphs">Y</text>
<text x="527" y="318" font-size="12" font-family="'Liberation Sans',sans-serif">N</text>
<text id="lay" x="560" y="299" font-size="12" font-family="'Liberation Sans',sans-serif" textLength="50" lengthAdjust="spacingAndGlyphs">Layout #6</text>
</svg>
<!-- block label -->
<div class="t" id="dbl" style="left:224px;transform:scaleX(0.961);top:342px;font-size:11px;">Block label:</div>
<div class="sunk2" style="left:283px;top:337px;width:306px;height:21px;background:#fff;"></div>
<div class="t" id="dblv" style="left:285.3px;top:342px;font-size:11px;">Is Tank #2 low?</div>
<div class="t" id="dopt" style="left:592.8px;transform:scaleX(1.04);top:342px;font-size:11px;">(optional)</div>
<!-- buttons -->
<div class="btn" style="left:470px;top:378px;width:75px;height:23px;"></div><div class="t" id="bok" style="left:499.8px;transform:scaleX(0.93);top:384px;font-size:11px;">OK</div>
<div class="raised2" style="left:565px;top:378px;width:75px;height:23px;"></div><div class="t" id="bcancel" style="left:585.8px;transform:scaleX(0.93);top:384px;font-size:11px;">Cancel</div>
</div>

</body>
</html>
